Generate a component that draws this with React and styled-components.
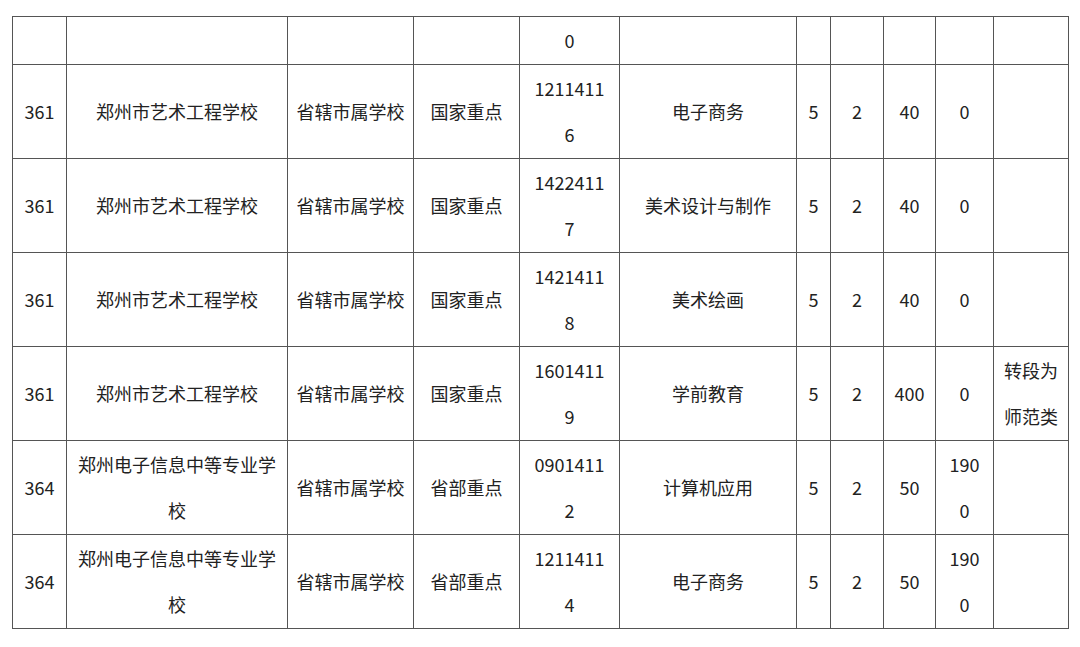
import React from 'react';
import styled, { createGlobalStyle } from 'styled-components';

const GlobalStyle = createGlobalStyle`
  html, body {
    margin: 0;
    padding: 0;
    background: #ffffff;
  }
  body {
    font-family: "Noto Sans CJK SC", "Noto Sans", sans-serif;
    color: #222;
  }
`;

const Page = styled.div`
  padding: 16px 12px 0 12px;
`;

const Table = styled.table`
  border-collapse: collapse;
  table-layout: fixed;
  width: 1056px;
  font-size: 18px;
  line-height: 46.5px;
`;

const Cell = styled.td`
  border: 1px solid #555;
  padding: 0;
  text-align: center;
  vertical-align: middle;
  white-space: nowrap;
  color: #222;
`;

const widths = [54, 221, 126, 106, 100, 177, 34, 53, 52, 58, 75];

const rows = [
  ['', '', '', '', ['0'], '', '', '', '', '', ''],
  ['361', '郑州市艺术工程学校', '省辖市属学校', '国家重点', ['1211411', '6'], '电子商务', '5', '2', '40', '0', ''],
  ['361', '郑州市艺术工程学校', '省辖市属学校', '国家重点', ['1422411', '7'], '美术设计与制作', '5', '2', '40', '0', ''],
  ['361', '郑州市艺术工程学校', '省辖市属学校', '国家重点', ['1421411', '8'], '美术绘画', '5', '2', '40', '0', ''],
  ['361', '郑州市艺术工程学校', '省辖市属学校', '国家重点', ['1601411', '9'], '学前教育', '5', '2', '400', '0', ['转段为', '师范类']],
  ['364', ['郑州电子信息中等专业学', '校'], '省辖市属学校', '省部重点', ['0901411', '2'], '计算机应用', '5', '2', '50', ['190', '0'], ''],
  ['364', ['郑州电子信息中等专业学', '校'], '省辖市属学校', '省部重点', ['1211411', '4'], '电子商务', '5', '2', '50', ['190', '0'], ''],
];

const Lines = ({ value }) => {
  if (!Array.isArray(value)) return value;
  return value.map((line, i) => (
    <React.Fragment key={i}>
      {i > 0 && <br />}
      {line}
    </React.Fragment>
  ));
};

export default function App() {
  return (
    <Page>
      <GlobalStyle />
      <Table>
        <colgroup>
          {widths.map((w, i) => (
            <col key={i} style={{ width: w }} />
          ))}
        </colgroup>
        <tbody>
          {rows.map((row, r) => (
            <tr key={r}>
              {row.map((value, c) => (
                <Cell key={c}>
                  <Lines value={value} />
                </Cell>
              ))}
            </tr>
          ))}
        </tbody>
      </Table>
    </Page>
  );
}
